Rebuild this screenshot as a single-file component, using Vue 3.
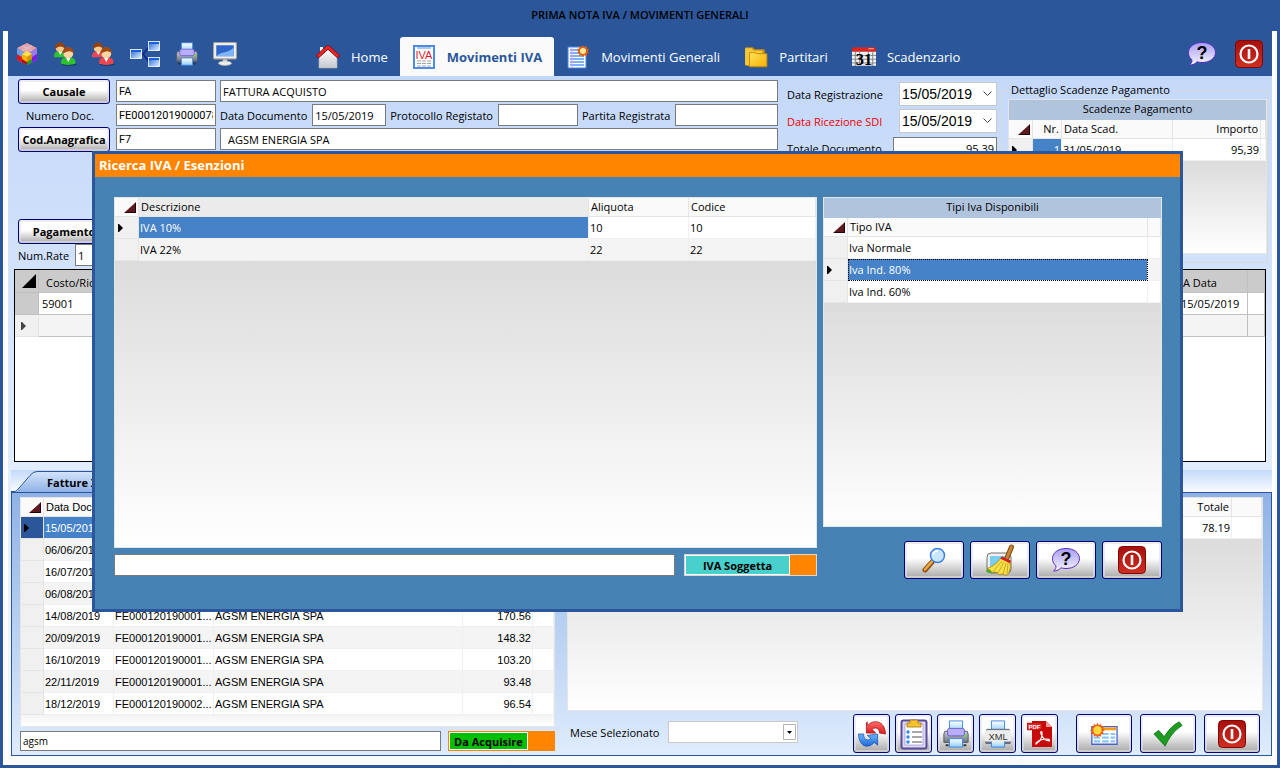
<template>
  <svg class="sprite" aria-hidden="true">
    <defs>
      <linearGradient id="gRed" x1="0" y1="0" x2="0" y2="1"><stop offset="0" stop-color="#a80f0c"/><stop offset="1" stop-color="#cf2f22"/></linearGradient>
      <linearGradient id="gLilac" x1="0" y1="0" x2="0" y2="1"><stop offset="0" stop-color="#a79df2"/><stop offset="1" stop-color="#f6f4ff"/></linearGradient>
      <linearGradient id="gSky" x1="0" y1="0" x2="1" y2="1"><stop offset="0" stop-color="#1c62dc"/><stop offset="1" stop-color="#e3f4ff"/></linearGradient>
      <linearGradient id="gPaper" x1="0" y1="0" x2="0" y2="1"><stop offset="0" stop-color="#ffffff"/><stop offset="1" stop-color="#8fd0ff"/></linearGradient>
      <linearGradient id="gGold" x1="0" y1="0" x2="1" y2="1"><stop offset="0" stop-color="#ffe45c"/><stop offset="1" stop-color="#f7ae00"/></linearGradient>
      <linearGradient id="gGrey" x1="0" y1="0" x2="0" y2="1"><stop offset="0" stop-color="#ffffff"/><stop offset="1" stop-color="#c6c6cf"/></linearGradient>
      <linearGradient id="gBody" x1="0" y1="0" x2="0" y2="1"><stop offset="0" stop-color="#c9cdd6"/><stop offset="1" stop-color="#6d7280"/></linearGradient>
      <linearGradient id="gTab" x1="0" y1="0" x2="0" y2="1"><stop offset="0" stop-color="#d3e3fb"/><stop offset="1" stop-color="#8fb2e6"/></linearGradient>
      <linearGradient id="gArrowRed" x1="0" y1="0" x2="0" y2="1"><stop offset="0" stop-color="#ff6b6b"/><stop offset="1" stop-color="#d91a1a"/></linearGradient>
      <linearGradient id="gArrowBlue" x1="0" y1="0" x2="0" y2="1"><stop offset="0" stop-color="#6ab6ff"/><stop offset="1" stop-color="#1d68d4"/></linearGradient>
    </defs>
    <symbol id="cube" viewBox="0 0 22 24">
      <path d="M11 1 21 6 11 12 1 6z" fill="#e9a0a6"/>
      <path d="M1 6 11 12V23L1 18z" fill="#6f9fe6"/>
      <path d="M21 6 11 12V23l10-5z" fill="#9a7bea"/>
      <path d="M1 12 6 15v5.500L1 18z" fill="#e01818"/><path d="M6 15l5 3v5l-5-2.500z" fill="#b80a12"/>
      <path d="M21 12l-5 3v5.500l5-2.500z" fill="#7d1fe0"/><path d="M16 15l-5 3v5l5-2.500z" fill="#1c9a2c"/>
      <path d="M11 9l5 3-5 3-5-3z" fill="#ffe04a"/><path d="M6 12l5 3v5l-5-3z" fill="#f7b500"/><path d="M16 12l-5 3v5l5-3z" fill="#dc9200"/>
      <path d="M6 3.500 16 9M16 3.500 6 9" stroke="#c9d8f5" stroke-width=".7"/>
    </symbol>
    <symbol id="usersGreen" viewBox="0 0 22 22">
      <ellipse cx="15" cy="20.500" rx="7" ry="1.500" fill="#1c3c70"/>
      <path d="M1 14c-.5-4.500 2-5.500 5.500-5.500S12 10 11.500 14z" fill="#2fc22f"/><path d="m5 9 1.700 3L8.500 9z" fill="#fff"/>
      <circle cx="6.500" cy="5.500" r="4" fill="#f6c98f"/><path d="M2 6.500C1-1.500 12-1.500 11 6.500 9.500 3.500 5 3 2 6.500z" fill="#94400f"/>
      <path d="M7.500 20c-.7-5 2.500-6 6.500-6s7.200 1 6.500 6q-6.500 2-13 0z" fill="#2fc22f"/><path d="m12 14.500 2 4 2-4z" fill="#fff"/>
      <circle cx="14" cy="10.500" r="4.500" fill="#fbd6a2"/><path d="M9 11C8 2.500 20 2.500 19 11 17.500 7.500 13 7.500 9 11z" fill="#a14b14"/>
    </symbol>
    <symbol id="usersRed" viewBox="0 0 22 22">
      <ellipse cx="15" cy="20.500" rx="7" ry="1.500" fill="#1c3c70"/>
      <path d="M1 14c-.5-4.500 2-5.500 5.500-5.500S12 10 11.500 14z" fill="#ee4650"/><path d="m5 9 1.700 3L8.500 9z" fill="#fff"/>
      <circle cx="6.500" cy="5.500" r="4" fill="#f6c98f"/><path d="M2 6.500C1-1.500 12-1.500 11 6.500 9.500 3.500 5 3 2 6.500z" fill="#94400f"/>
      <path d="M7.500 20c-.7-5 2.500-6 6.500-6s7.200 1 6.500 6q-6.500 2-13 0z" fill="#ee4650"/><path d="m12 14.500 2 4 2-4z" fill="#fff"/>
      <circle cx="14" cy="10.500" r="4.500" fill="#fbd6a2"/><path d="M9 11C8 2.500 20 2.500 19 11 17.500 7.500 13 7.500 9 11z" fill="#a14b14"/>
    </symbol>
    <symbol id="tree" viewBox="0 0 30 26">
      <path d="M11 13h2L19 6M13 13l6 8" fill="none" stroke="#14218f" stroke-width="1.600"/>
      <g fill="url(#gSky)" stroke="#fff" stroke-width=".8"><rect x=".5" y="8.500" width="11" height="9"/><rect x="18.500" y=".5" width="11" height="9"/><rect x="18.500" y="16.500" width="11" height="9"/></g>
      <path d="M1 9h10v2H1zM19 1h10v2H19zM19 17h10v2H19z" fill="#1b5fe0"/>
    </symbol>
    <symbol id="printer" viewBox="0 0 28 30">
      <path d="M7 1h14v11H7z" fill="url(#gPaper)" stroke="#3b86e0"/>
      <path d="M2 12h24l1 3v9H1v-9z" fill="url(#gBody)" stroke="#555b68"/>
      <rect x="5" y="9" width="18" height="8" rx="2" fill="#b9aef7" stroke="#6a5bd0"/>
      <rect x="23" y="16" width="2" height="2" fill="#5cf000"/>
      <path d="M7 20h14v9H7z" fill="url(#gPaper)" stroke="#3b86e0"/>
      <path d="M3 26h3v2H3zM22 26h3v2h-3z" fill="#333"/>
    </symbol>
    <symbol id="monitor" viewBox="0 0 22 22">
      <rect x=".5" y=".5" width="21" height="15" rx="1" fill="#efefef" stroke="#a9a295"/>
      <rect x="3" y="3" width="16" height="10" fill="#2d66c8"/><path d="M3 13c5-5 10-2 16-8v8z" fill="#7fb5f5"/>
      <path d="M9 16h4v3H9z" fill="#d8d8d8"/><ellipse cx="11" cy="19.500" rx="6" ry="2" fill="#eee" stroke="#b5b0a5" stroke-width=".6"/>
    </symbol>
    <symbol id="home" viewBox="0 0 24 24">
      <path d="M4 2h3v6H4z" fill="#eee"/><path d="M3 12 12 4l9 8v11H3z" fill="url(#gGrey)" stroke="#b4b4b4" stroke-width=".6"/>
      <path d="M1 12 12 2l11 10" fill="none" stroke="#7d0d0d" stroke-width="4"/><path d="M1.500 11.500 12 2l10.500 9.500" fill="none" stroke="#e8262b" stroke-width="2.600"/>
    </symbol>
    <symbol id="ivaDoc" viewBox="0 0 22 24">
      <rect x="1" y="1" width="20" height="22" fill="#fff" stroke="#4b8bea" stroke-width="2"/>
      <path d="M4 3h14" stroke="#5c8fd8"/><path d="M4 16h4m1 0h4m1 0h4M4 18.500h4m1 0h4m1 0h4M4 21h4m1 0h4m1 0h4" stroke="#a3a3a3"/>
    </symbol>
    <symbol id="note" viewBox="0 0 22 24">
      <path d="M1 2h18v21H1z" fill="#fff" stroke="#3c86f0"/><path d="M3 5h14M3 8h14M3 11h14M3 14h14M3 17h14M3 20h14" stroke="#5798f5" stroke-width="1.400"/>
      <path d="M5 2v21" stroke="#e79af0"/>
      <path d="m16 0 1.300 2.200L20 1l-.3 2.800 2.300.2-1.300 2.400L22 8l-2.300.8.300 2.500-2.700-1L16 12l-1.500-1.900-2.300 1 .2-2.500L10 8l1.400-2L10 4l2.400-.4L12 1l2.600 1.200z" fill="#e85a00"/><circle cx="16" cy="6" r="3" fill="#ffe9a0"/>
    </symbol>
    <symbol id="folder" viewBox="0 0 22 20">
      <path d="M1 18V2q0-1 1-1h6l2 2h9v15z" fill="#c98a06"/><path d="M1 17V2h6l2 2h8v3H5v11z" fill="#f5c83a"/>
      <path d="M5 19V6h5l2 1h9v12z" fill="url(#gGold)" stroke="#c98500" stroke-width=".8"/>
    </symbol>
    <symbol id="calendar" viewBox="0 0 22 18">
      <path d="M0 4h22v13H0z" fill="#f2f2f2"/><path d="M0 0h22v4H0z" fill="#e2231a"/><path d="M15 1h5v1h-5z" fill="#ffb1a8"/>
      <path d="M0 7.500h22M0 11h22M0 14.500h22M3 4v13M7 4v13M15 4v13M19 4v13" stroke="#777" stroke-width=".8"/>
    </symbol>
    <symbol id="help" viewBox="0 0 30 26">
      <path d="M15 1.500c8 0 13.500 4.400 13.500 10S23 21.500 15 21.500c-2 0-3.500-.2-5-.7C8 23 6 24 2.500 24c2-1.500 2.500-3 2.500-5.200C2.500 17 1.500 14.500 1.500 11.500c0-5.600 5.500-10 13.500-10z" fill="url(#gLilac)" stroke="#5a2cc0"/>
    </symbol>
    <symbol id="power" viewBox="0 0 28 28">
      <rect x=".5" y=".5" width="27" height="27" rx="4" fill="url(#gRed)" stroke="#7d0804"/>
      <circle cx="14" cy="14" r="8.500" fill="none" stroke="#fff" stroke-width="2.200"/><path d="M14 9v10" stroke="#fff" stroke-width="2.600"/>
    </symbol>
    <symbol id="lens" viewBox="0 0 24 26">
      <path d="m3 23 8-9" stroke="#8a5210" stroke-width="5" stroke-linecap="round"/><path d="m3 22.500 7.500-8.500" stroke="#f0a94a" stroke-width="2.600" stroke-linecap="round"/>
      <circle cx="15.500" cy="8.500" r="7" fill="#c9e6ff" stroke="#3f7fe0" stroke-width="1.500"/><path d="M11 8c.5-3 3-4.500 5-4" stroke="#fff" stroke-width="1.500" fill="none"/>
    </symbol>
    <symbol id="broom" viewBox="0 0 32 32">
      <rect x="3" y="9" width="24" height="20" rx="4" fill="#f0f0f0" stroke="#6f6f6f"/><rect x="6" y="12" width="18" height="14" rx="1" fill="#79cdee"/>
      <path d="M4 25c-3 1-2 4 2 4h14l6-2c-2-3-4-3-7-2z" fill="#3fae2d"/>
      <path d="m27.500 3-5 12" stroke="#7d4a10" stroke-width="5" stroke-linecap="round"/><path d="m27.500 3-5 12" stroke="#c98436" stroke-width="3" stroke-linecap="round"/>
      <path d="m17 14 9 4c1 5 0 10-3 13.500L19 30l-4 .5L12 28l-4 .5L6 26l-3-1.500C10 22 14 18 17 14z" fill="#f8e24a" stroke="#a8840e" stroke-width=".8"/>
      <path d="M18 17 9 27.500M20 18l-6 11m8-10-3 11m5-11-1 11" stroke="#bd9615" stroke-width=".8"/><path d="m17 13.500 9.500 4.500" stroke="#d01f1f" stroke-width="3"/>
    </symbol>
    <symbol id="refresh" viewBox="0 0 30 30">
      <path d="M10 2v4C16-1 29 0 29.500 15L23 14C23 9 19 7 15 10l4 4H9V3z" fill="url(#gArrowRed)" stroke="#a31111" stroke-width=".8"/>
      <path d="M.5 15H6c0 6 4 8 8 5l-4-3.500L21 15v12l-3.500-3C10 32 1 28 .5 15z" fill="url(#gArrowBlue)" stroke="#1a50b0" stroke-width=".8"/>
    </symbol>
    <symbol id="clip" viewBox="0 0 28 32">
      <rect x="1.500" y="2.500" width="25" height="28" rx="2" fill="#dcd9f8" stroke="#5b4a9a" stroke-width="2"/><path d="M5 6h18v21H5z" fill="#fff" stroke="#8a82c0" stroke-width=".6"/>
      <path d="M7 9V5h3V2h8v3h3v4z" fill="#f5c234" stroke="#a87404" stroke-width=".8"/>
      <path d="M12 14h10M12 19h10M12 24h10" stroke="#555" stroke-width="1.200"/><g fill="#2e8ce8"><circle cx="8" cy="14" r="1.700"/><circle cx="8" cy="19" r="1.700"/><circle cx="8" cy="24" r="1.700"/></g>
    </symbol>
    <symbol id="xml" viewBox="0 0 30 30">
      <path d="M8 1h14v11H8z" fill="url(#gPaper)" stroke="#3b86e0"/><path d="M3 10h24l1 3v12H2V13z" fill="url(#gBody)" stroke="#555b68"/>
      <path d="M8 21h14v8H8z" fill="url(#gPaper)" stroke="#3b86e0"/><rect x="1" y="11" width="28" height="12" rx="1" fill="#ececec"/>
    </symbol>
    <symbol id="pdf" viewBox="0 0 26 28">
      <path d="M5 1h14l6 6v20H5z" fill="#c80a0a"/><path d="M19 1v6h6z" fill="#f39a9a"/><path d="M0 3h15v7H0z" fill="#e32222" stroke="#a00" stroke-width=".5"/>
      <path d="M9 24c4-2 7-8 6-12-1-1-2 0-1 2 1 3 3 6 8 7 1 0 1-2-2-2-4 0-8 1-11 4z" fill="none" stroke="#fff" stroke-width="1.100"/>
    </symbol>
    <symbol id="newGrid" viewBox="0 0 30 24">
      <path d="M2 4h27v19H2z" fill="#fff" stroke="#4a62c8" stroke-width="1.400"/><path d="M12 5h16v3H12z" fill="#ff9a10"/>
      <path d="M4 12h7M13 12h7M22 12h5M4 16h7M13 16h7M22 16h5M4 20h7M13 20h7M22 20h5" stroke="#8cc6fa" stroke-width="2.400"/>
      <path d="m8 0 1.500 2.500L12 1v3l3 0-1.500 2.500L16 8l-2.500 1.500L15 12l-3 0v3l-2.500-1.500L8 16l-1.500-2.500L4 15v-3l-3 0 1.500-2.500L0 8l2.500-1.500L1 4l3 0V1l2.500 1.500z" fill="#f05a10"/><circle cx="8" cy="8" r="4.500" fill="#ffd83a"/>
    </symbol>
    <symbol id="check" viewBox="0 0 32 28">
      <path d="m1 14 5-4 6 7C16 10 22 4 28 1l3 4C23 10 17 18 13 27z" fill="#1f9a22" stroke="#127014" stroke-width=".8"/>
    </symbol>
    <symbol id="corner" viewBox="0 0 12 11"><path d="M12 0v11H0z" fill="#5e1a1f"/><path d="M11.500 1v9.500H1" fill="none" stroke="#1d0507"/></symbol>
    <symbol id="cornerBlack" viewBox="0 0 14 14"><path d="M14 0v14H0z" fill="#000"/></symbol>
    <symbol id="marker" viewBox="0 0 5 8"><path d="M0 0h1l4 4-4 4H0z" fill="currentColor"/></symbol>
    <symbol id="chevron" viewBox="0 0 9 6"><path d="m.5.5 4 4 4-4" fill="none" stroke="#444"/></symbol>
  </svg>

  <div class="window">
    <header class="titlebar">PRIMA NOTA IVA / MOVIMENTI GENERALI</header>
    <div class="frame">
      <nav class="ribbon">
        <div class="quick">
          <button v-for="q in quick" :key="q.icon" type="button" class="flat" :aria-label="q.label">
            <Icon :name="q.icon" :class="q.size"/>
          </button>
        </div>
        <div class="tabs">
          <button v-for="t in tabs" :key="t.label" type="button" class="tab" :class="{ active: t.label == activeTab }" @click="activeTab = t.label">
            <Icon :name="t.icon" class="i24"/>{{ t.label }}
          </button>
        </div>
        <div class="session">
          <button type="button" class="flat" aria-label="Aiuto"><Icon name="help" class="i30"/></button>
          <button type="button" class="flat" aria-label="Esci"><Icon name="power" class="i28"/></button>
        </div>
      </nav>

      <main class="content">
        <section class="top">
          <form class="form" @submit.prevent>
            <div class="line">
              <button type="button" class="push key">Causale</button>
              <input class="code" v-model="doc.causale" aria-label="Causale">
              <input class="grow" v-model="doc.descrizione" aria-label="Descrizione causale">
            </div>
            <div class="line">
              <label class="key-label" for="numDoc">Numero Doc.</label>
              <input id="numDoc" class="code" v-model="doc.numero">
              <label for="dataDoc">Data Documento</label>
              <input id="dataDoc" class="w74" v-model="doc.data">
              <label for="protocollo">Protocollo Registato</label>
              <input id="protocollo" class="w80" v-model="doc.protocollo">
              <label for="partita">Partita Registrata</label>
              <input id="partita" class="grow" v-model="doc.partita">
            </div>
            <div class="line">
              <button type="button" class="push key">Cod.Anagrafica</button>
              <input class="code" v-model="doc.codice" aria-label="Codice anagrafica">
              <input class="grow indent" v-model="doc.anagrafica" aria-label="Anagrafica">
            </div>
            <div class="line pay"><button type="button" class="push key">Pagamento</button></div>
            <div class="line">
              <label for="rate" class="rate-label">Num.Rate</label>
              <input id="rate" class="w74" v-model="doc.rate">
            </div>
          </form>

          <div class="dates">
            <div class="date-line">
              <label for="dataReg">Data Registrazione</label>
              <div class="picker"><input id="dataReg" v-model="doc.dataReg"><button type="button" aria-label="Scegli data"><Icon name="chevron"/></button></div>
            </div>
            <div class="date-line">
              <label for="dataSdi" class="red">Data Ricezione SDI</label>
              <div class="picker"><input id="dataSdi" v-model="doc.dataSdi"><button type="button" aria-label="Scegli data"><Icon name="chevron"/></button></div>
            </div>
            <div class="date-line">
              <label for="totale">Totale Documento</label>
              <input id="totale" class="total" v-model="doc.totale">
            </div>
          </div>

          <fieldset class="due">
            <legend>Dettaglio Scadenze Pagamento</legend>
            <div class="grid">
              <table>
                <caption>Scadenze Pagamento</caption>
                <colgroup><col class="c24"><col class="c29"><col class="c111"><col><col class="c5"></colgroup>
                <thead><tr><th class="sel"><Icon name="corner" class="corner"/></th><th class="num">Nr.</th><th>Data Scad.</th><th class="num">Importo</th><th></th></tr></thead>
                <tbody>
                  <tr><td class="sel"><Icon name="marker" class="marker"/></td><td class="num hit">1</td><td>31/05/2019</td><td class="num">95,39</td><td></td></tr>
                </tbody>
              </table>
              <div class="void"></div>
            </div>
          </fieldset>
        </section>

        <section class="lines">
          <table>
            <colgroup><col class="c24"><col><col class="c70"><col class="c17"></colgroup>
            <thead><tr><th class="sel"><Icon name="cornerBlack" class="corner-big"/></th><th class="first">Costo/Ricavo</th><th>A Data</th><th></th></tr></thead>
            <tbody>
              <tr><td class="sel dark"></td><td>59001</td><td>15/05/2019</td><td></td></tr>
              <tr class="alt"><td class="sel"><Icon name="marker" class="marker new"/></td><td></td><td></td><td></td></tr>
            </tbody>
          </table>
        </section>

        <div class="strip">
          <svg class="slope" viewBox="0 0 26 21"><path d="M5 21 20 4Q23 1 26 1V21z" fill="url(#gTab)"/><path d="M0 20.500H4Q6 20 8 17L19 4.500Q22 .5 26 .5" fill="none" stroke="#2b579a"/></svg>
          <button type="button" class="sheet">Fatture XML</button>
        </div>
        <section class="panel">
          <div class="invoices">
            <div class="grid">
              <table>
                <colgroup><col class="c23"><col class="c70"><col class="c100"><col><col class="c70"><col class="c21"></colgroup>
                <thead><tr><th class="sel"><Icon name="corner" class="corner"/></th><th>Data Doc.</th><th></th><th></th><th></th><th></th></tr></thead>
                <tbody>
                  <tr v-for="(f, i) in fatture" :key="f.data" :class="{ alt: i % 2 == 1, current: i == 0 }">
                    <td class="sel"><Icon v-if="i == 0" name="marker" class="marker"/></td>
                    <td>{{ f.data }}</td><td>{{ f.numero }}</td><td>AGSM ENERGIA SPA</td><td class="num">{{ f.importo }}</td><td></td>
                  </tr>
                </tbody>
              </table>
              <div class="void pale"></div>
            </div>
            <div class="search">
              <input v-model="cerca" aria-label="Cerca fattura">
              <button type="button" class="toggle green"><span>Da Acquisire</span><i></i></button>
            </div>
          </div>
          <div class="detail">
            <div class="grid">
              <table>
                <colgroup><col><col class="c70"><col class="c30"></colgroup>
                <thead><tr><th></th><th class="num">Totale</th><th></th></tr></thead>
                <tbody><tr><td></td><td class="num">78.19</td><td></td></tr></tbody>
              </table>
              <div class="void"></div>
            </div>
            <div class="actions">
              <label for="mese">Mese Selezionato</label>
              <div class="combo"><select id="mese" v-model="mese"><option value=""></option></select><svg viewBox="0 0 13 16" aria-hidden="true"><path d="M.5.5h12v15H.5z" fill="#fff" stroke="#b5b5b5"/><path d="M4 7h5l-2.500 3z"/></svg></div>
              <div class="tools">
                <button v-for="a in azioni" :key="a.icon" type="button" class="push" :class="{ wide: a.wide }" :aria-label="a.label">
                  <Icon :name="a.icon" :class="a.size"/>
                </button>
              </div>
            </div>
          </div>
        </section>
      </main>
    </div>

    <div class="dialog" role="dialog" aria-labelledby="dlgTitle">
      <h2 id="dlgTitle">Ricerca IVA / Esenzioni</h2>
      <div class="dialog-body">
        <div class="rates">
          <div class="grid">
            <table>
              <colgroup><col class="c24"><col><col class="c100"><col class="c127"></colgroup>
              <thead><tr><th class="sel"><Icon name="corner" class="corner"/></th><th class="sorted">Descrizione</th><th>Aliquota</th><th>Codice</th></tr></thead>
              <tbody>
                <tr v-for="(r, i) in aliquote" :key="r.codice" :class="{ alt: i % 2 == 1 }">
                  <td class="sel"><Icon v-if="i == 0" name="marker" class="marker"/></td>
                  <td :class="{ hit: i == 0 }">{{ r.descrizione }}</td><td>{{ r.aliquota }}</td><td>{{ r.codice }}</td>
                </tr>
              </tbody>
            </table>
            <div class="void"></div>
          </div>
          <div class="search">
            <input v-model="filtro" aria-label="Cerca IVA">
            <button type="button" class="toggle teal"><span>IVA Soggetta</span><i></i></button>
          </div>
        </div>
        <div class="types">
          <div class="grid">
            <table>
              <caption>Tipi Iva Disponibili</caption>
              <colgroup><col class="c24"><col><col class="c13"></colgroup>
              <thead><tr><th class="sel"><Icon name="corner" class="corner"/></th><th>Tipo IVA</th><th></th></tr></thead>
              <tbody>
                <tr v-for="(t, i) in tipi" :key="t" :class="{ alt: i % 2 == 1 }">
                  <td class="sel"><Icon v-if="i == 1" name="marker" class="marker"/></td>
                  <td :class="{ hit: i == 1, focus: i == 1 }">{{ t }}</td><td></td>
                </tr>
              </tbody>
            </table>
            <div class="void"></div>
          </div>
          <div class="dialog-tools">
            <button type="button" class="push" aria-label="Cerca"><Icon name="lens" class="i26"/></button>
            <button type="button" class="push" aria-label="Pulisci"><Icon name="broom" class="i32"/></button>
            <button type="button" class="push" aria-label="Aiuto"><Icon name="help" class="i30"/></button>
            <button type="button" class="push" aria-label="Esci"><Icon name="power" class="i28"/></button>
          </div>
        </div>
      </div>
    </div>
  </div>
</template>

<script setup>
import { h, ref, reactive } from 'vue';

// lettering drawn over some of the icons
const lettering = {
  ivaDoc: { box: '0 0 22 24', text: 'IVA', x: 11, y: 14, size: 11, color: '#e0182d' },
  calendar: { box: '0 0 22 18', text: '31', x: 11, y: 16, size: 15, family: 'Liberation Serif, serif', weight: 'bold' },
  help: { box: '0 0 30 26', text: '?', x: 15, y: 18, size: 18, weight: 'bold' },
  xml: { box: '0 0 30 30', text: 'XML', x: 15, y: 21, size: 10, color: '#333' },
  pdf: { box: '0 0 26 28', text: 'PDF', x: 7.5, y: 9, size: 6, weight: 'bold', color: '#fff' },
}

const Icon = (props) => {
  const t = lettering[props.name]
  return h('svg', { viewBox: t ? t.box : undefined, 'aria-hidden': 'true' }, [
    h('use', { href: '#' + props.name }),
    t && h('text', {
      x: t.x,
      y: t.y,
      'text-anchor': 'middle',
      'font-family': t.family || 'Liberation Sans, sans-serif',
      'font-size': t.size,
      'font-weight': t.weight || 'normal',
      fill: t.color || '#000',
    }, t.text),
  ])
}
Icon.props = ['name']

const activeTab = ref('Movimenti IVA')
const cerca = ref('agsm')
const filtro = ref('')
const mese = ref('')

const quick = [
  { icon: 'cube', label: 'Moduli', size: 'i24' },
  { icon: 'usersGreen', label: 'Clienti', size: 'i24' },
  { icon: 'usersRed', label: 'Fornitori', size: 'i24' },
  { icon: 'tree', label: 'Piano dei conti', size: 'i30' },
  { icon: 'printer', label: 'Stampa', size: 'i24' },
  { icon: 'monitor', label: 'Desktop', size: 'i24' },
]

const tabs = [
  { icon: 'home', label: 'Home' },
  { icon: 'ivaDoc', label: 'Movimenti IVA' },
  { icon: 'note', label: 'Movimenti Generali' },
  { icon: 'folder', label: 'Partitari' },
  { icon: 'calendar', label: 'Scadenzario' },
]

const doc = reactive({
  causale: 'FA',
  descrizione: 'FATTURA ACQUISTO',
  numero: 'FE00012019000078',
  data: '15/05/2019',
  protocollo: '',
  partita: '',
  codice: 'F7',
  anagrafica: 'AGSM ENERGIA SPA',
  rate: '1',
  dataReg: '15/05/2019',
  dataSdi: '15/05/2019',
  totale: '95.39',
})

const fatture = [
  { data: '15/05/2019', numero: '', importo: '' },
  { data: '06/06/2019', numero: '', importo: '' },
  { data: '16/07/2019', numero: '', importo: '' },
  { data: '06/08/2019', numero: '', importo: '' },
  { data: '14/08/2019', numero: 'FE000120190001...', importo: '170.56' },
  { data: '20/09/2019', numero: 'FE000120190001...', importo: '148.32' },
  { data: '16/10/2019', numero: 'FE000120190001...', importo: '103.20' },
  { data: '22/11/2019', numero: 'FE000120190001...', importo: '93.48' },
  { data: '18/12/2019', numero: 'FE000120190002...', importo: '96.54' },
]

const aliquote = [
  { descrizione: 'IVA 10%', aliquota: '10', codice: '10' },
  { descrizione: 'IVA 22%', aliquota: '22', codice: '22' },
]

const tipi = ['Iva Normale', 'Iva Ind. 80%', 'Iva Ind. 60%']

const azioni = [
  { icon: 'refresh', label: 'Aggiorna', size: 'i30' },
  { icon: 'clip', label: 'Elenco', size: 'i32' },
  { icon: 'printer', label: 'Stampa', size: 'i30' },
  { icon: 'xml', label: 'Esporta XML', size: 'i30' },
  { icon: 'pdf', label: 'Esporta PDF', size: 'i28' },
  { icon: 'newGrid', label: 'Nuovo', size: 'i28', wide: true },
  { icon: 'check', label: 'Conferma', size: 'i30', wide: true },
  { icon: 'power', label: 'Esci', size: 'i28', wide: true },
]
</script>

<style>
body {
  margin: 0;
  background: #2b579a;
}
</style>

<style scoped>
* {
  box-sizing: border-box;
}
.sprite {
  position: absolute;
  width: 0;
  height: 0;
}
.window {
  position: relative;
  display: flex;
  flex-direction: column;
  min-height: 100vh;
  padding: 0 3px 3px;
  background: #2b579a;
  font-family: "Open Sans", "Noto Sans", sans-serif;
  font-size: 11px;
  color: #000;
}
button, input, select {
  font: inherit;
  color: inherit;
}
svg {
  display: block;
}
.titlebar {
  height: 31px;
  line-height: 30px;
  text-align: center;
  font-weight: 600;
}
.frame {
  flex: 1;
  display: flex;
  flex-direction: column;
  padding: 0 5px;
  background: #fff;
}
.i24 { width: 24px; height: 24px; }
.i26 { width: 26px; height: 26px; }
.i28 { width: 28px; height: 28px; }
.i30 { width: 30px; height: 28px; }
.i32 { width: 32px; height: 32px; }

/* ribbon */
.ribbon {
  display: flex;
  height: 45px;
  background: #2b579a;
  color: #fff;
}
.quick {
  display: flex;
  align-items: center;
  gap: 14px;
  width: 296px;
  padding-left: 7px;
}
.quick .i30 {
  margin: 0 1px;
}
.flat {
  padding: 0;
  border: 0;
  background: none;
}
.tabs {
  display: flex;
  align-items: flex-end;
  flex: 1;
}
.tab {
  display: flex;
  align-items: center;
  gap: 11px;
  height: 39px;
  padding: 0 12px;
  border: 0;
  border-radius: 3px 3px 0 0;
  background: none;
  font-size: 13px;
}
.tab.active {
  background: #fafafa;
  color: #2b579a;
  font-weight: 700;
}
.session {
  display: flex;
  align-items: center;
  gap: 18px;
  padding-right: 9px;
}

.content {
  flex: 1;
  display: flex;
  flex-direction: column;
  padding-bottom: 9px;
  background: linear-gradient(#c4d8f9, #e2edfe 394px, #fafcff);
}

/* document header */
.top {
  display: flex;
  gap: 4px;
  min-height: 193px;
  padding: 3px 4px 0 10px;
}
.form {
  flex: 1;
}
.line {
  display: flex;
  align-items: center;
  gap: 4px;
  height: 24px;
}
.line label {
  margin-right: 1px;
}
.line input, .total {
  height: 22px;
  min-width: 0;
  padding: 0 2px;
  border: 1px solid #7a7a7a;
  background: #fff;
}
.push {
  display: flex;
  align-items: center;
  justify-content: center;
  padding: 0;
  border: 1px solid #000080;
  border-radius: 3px;
  background: linear-gradient(#fff 45%, #c8c8c8 80%, #a8a8a8);
  box-shadow: inset 0 0 0 2px rgba(225, 225, 225, .6);
}
.key {
  width: 92px;
  height: 25px;
  margin-right: 2px;
  font-weight: 700;
}
.line .code {
  width: 100px;
  font-family: Roboto, sans-serif;
}
.line .key-label {
  width: 92px;
  margin-right: 2px;
  padding-left: 8px;
}
.grow {
  flex: 1;
}
.line .indent {
  padding-left: 7px;
}
.w74 { width: 74px; }
.w80 { width: 80px; }
.pay {
  margin-top: 68px;
}
.rate-label {
  width: 52px;
}
.dates {
  display: flex;
  flex-direction: column;
  gap: 3px;
  width: 215px;
  padding: 3px 0 0 5px;
}
.date-line {
  display: flex;
  align-items: center;
  justify-content: space-between;
  height: 24px;
}
.red {
  color: #f00000;
}
.picker {
  display: flex;
  align-items: center;
  width: 98px;
  height: 24px;
  border: 1px solid #c9c9c9;
  background: #fff;
}
.picker input {
  flex: 1;
  min-width: 0;
  padding: 0 2px;
  border: 0;
  font-family: "Liberation Sans", sans-serif;
  font-size: 14px;
}
.picker button {
  padding: 4px;
  border: 0;
  background: none;
}
.picker svg {
  width: 9px;
  height: 6px;
}
.total {
  width: 104px;
  text-align: right;
}
.due {
  width: 267px;
  height: 181px;
  margin: 3px 0 0;
  padding: 1px 0 8px 6px;
  border: 1px solid #d9d9d9;
}
.due legend {
  padding: 0 3px;
  line-height: 16px;
}
.due .grid {
  height: 155px;
}

/* data grids */
.grid {
  display: flex;
  flex-direction: column;
  border: 1px solid #e5e5e5;
  background: #fff;
}
table {
  width: 100%;
  table-layout: fixed;
  border-collapse: separate;
  border-spacing: 0;
}
caption {
  height: 20px;
  line-height: 18px;
  background: #b0c4de;
  text-align: center;
}
th, td {
  height: 22px;
  padding: 0 2px;
  border-right: 1px solid #f0f0f0;
  border-bottom: 1px solid #f0f0f0;
  line-height: 16px;
  text-align: left;
  font-weight: 400;
  white-space: nowrap;
  overflow: hidden;
}
th {
  height: 19px;
  border-color: #e5e5e5;
  background: #fafafa;
}
td {
  background: #fff;
  padding: 0 1px;
}
.alt td {
  background: #f4f4f4;
}
td.sel, .alt td.sel {
  background: #f0f0f0;
  border-color: #e5e5e5;
}
.sorted {
  background: #ebebeb;
}
.num {
  text-align: right;
}
td.hit, .current td {
  background: #4682c8;
  color: #fff;
}
td.focus {
  outline: 1px dotted #000;
  outline-offset: -1px;
}
.current td.sel {
  background: #2b579a;
  color: #000;
}
.void {
  flex: 1;
  background: linear-gradient(#dcdcdc, #fff);
}
.void.pale {
  background: linear-gradient(#f4f4f4, #fff);
}
.corner {
  width: 12px;
  height: 11px;
  margin-left: auto;
}
.corner-big {
  width: 14px;
  height: 14px;
  margin-left: 5px;
}
.marker {
  width: 5px;
  height: 8px;
  margin-left: 2px;
}
.marker.new {
  margin-left: 3px;
  color: #444;
}
.c5 { width: 5px; }
.c13 { width: 13px; }
.c17 { width: 17px; }
.c21 { width: 21px; }
.c23 { width: 23px; }
.c24 { width: 24px; }
.c29 { width: 29px; }
.c30 { width: 30px; }
.c70 { width: 70px; }
.c100 { width: 100px; }
.c111 { width: 111px; }
.c127 { width: 127px; }

.lines {
  height: 193px;
  margin: 0 6px;
  border: 1px solid #000;
  background: #fff;
}
.lines th {
  height: 23px;
  padding: 3px 5px 0;
  background: #cbcbcb;
  border-color: #c0c0c0;
}
.lines th.sel {
  padding: 0 2px;
}
.lines th.first {
  padding-left: 7px;
}
.lines td {
  border-color: #c0c0c0;
  padding-left: 3px;
}
.lines td.dark {
  background: #cbcbcb;
}

/* lower panel */
.strip {
  display: flex;
  align-items: flex-end;
  height: 22px;
  margin: 8px 0 0 3px;
  background: linear-gradient(#c4d9fa, #fafcff);
}
.slope {
  width: 26px;
  height: 21px;
}
.sheet {
  width: 120px;
  height: 21px;
  padding: 0 10px;
  border: 0;
  border-top: 1px solid #2b579a;
  background: linear-gradient(#d3e3fb, #8fb2e6);
  text-align: left;
  font-weight: 700;
}
.panel {
  flex: 1;
  display: flex;
  gap: 12px;
  margin-left: 3px;
  padding: 4px 8px 2px;
  border: 1px solid #2b579a;
  background: linear-gradient(#8fb2e6, #dfecfd);
}
.invoices {
  display: flex;
  flex-direction: column;
  gap: 4px;
  width: 535px;
  padding-bottom: 2px;
  font-family: "Liberation Sans", sans-serif;
}
.invoices .grid, .detail .grid {
  flex: 1;
}
.search {
  display: flex;
  gap: 7px;
  height: 20px;
}
.search input {
  flex: 1;
  min-width: 0;
  padding: 0 2px;
  border: 1px solid #7a7a7a;
  background: #fff;
  font-family: "Open Sans", sans-serif;
  font-size: 10px;
}
.toggle {
  display: flex;
  width: 107px;
  padding: 0;
  border: 1px solid #ff8400;
  font-family: "Open Sans", sans-serif;
  font-weight: 700;
}
.toggle span {
  flex: 1;
  display: flex;
  align-items: center;
  justify-content: center;
  align-self: stretch;
  border: 1px solid #fff;
}
.toggle i {
  align-self: stretch;
  width: 26px;
  background: #ff8400;
}
.green span {
  background: #00c000;
}
.detail {
  flex: 1;
  display: flex;
  flex-direction: column;
}
.actions {
  display: flex;
  align-items: center;
  height: 42px;
  padding: 0 3px;
}
.combo {
  position: relative;
  width: 130px;
  height: 22px;
  margin-left: 9px;
}
.combo select {
  width: 100%;
  height: 100%;
  border: 1px solid #c9c9c9;
  border-radius: 0;
  background: #fff;
  appearance: none;
}
.combo svg {
  position: absolute;
  top: 3px;
  right: 2px;
  width: 13px;
  height: 16px;
  pointer-events: none;
}
.tools {
  display: flex;
  gap: 5px;
  margin: 3px 0 0 auto;
}
.tools .push {
  width: 37px;
  height: 39px;
}
.tools .wide {
  width: 56px;
  margin-left: 3px;
}
.tools .push:not(.wide) + .wide {
  margin-left: 13px;
}

/* search dialog */
.dialog {
  position: absolute;
  top: 151px;
  left: 92px;
  right: 97px;
  border: 3px solid #2b579a;
  background: #4682b4;
}
.dialog h2 {
  margin: 0;
  padding-left: 4px;
  background: #ff8400;
  color: #fff;
  font-size: 13px;
  font-weight: 700;
  line-height: 23px;
}
.dialog-body {
  display: flex;
  gap: 6px;
  padding: 20px 18px 30px 19px;
}
.rates {
  flex: 1;
  display: flex;
  flex-direction: column;
  gap: 6px;
}
.rates .grid {
  height: 351px;
}
.rates .search {
  height: 22px;
  gap: 9px;
}
.rates .toggle {
  width: 133px;
  border-color: #d9d9d9;
}
.teal span {
  background: #48d1cc;
}
.types {
  display: flex;
  flex-direction: column;
  gap: 14px;
  width: 339px;
}
.types .grid {
  height: 330px;
}
.dialog-tools {
  display: flex;
  justify-content: flex-end;
  gap: 6px;
}
.dialog-tools .push {
  width: 60px;
  height: 38px;
}
</style>
